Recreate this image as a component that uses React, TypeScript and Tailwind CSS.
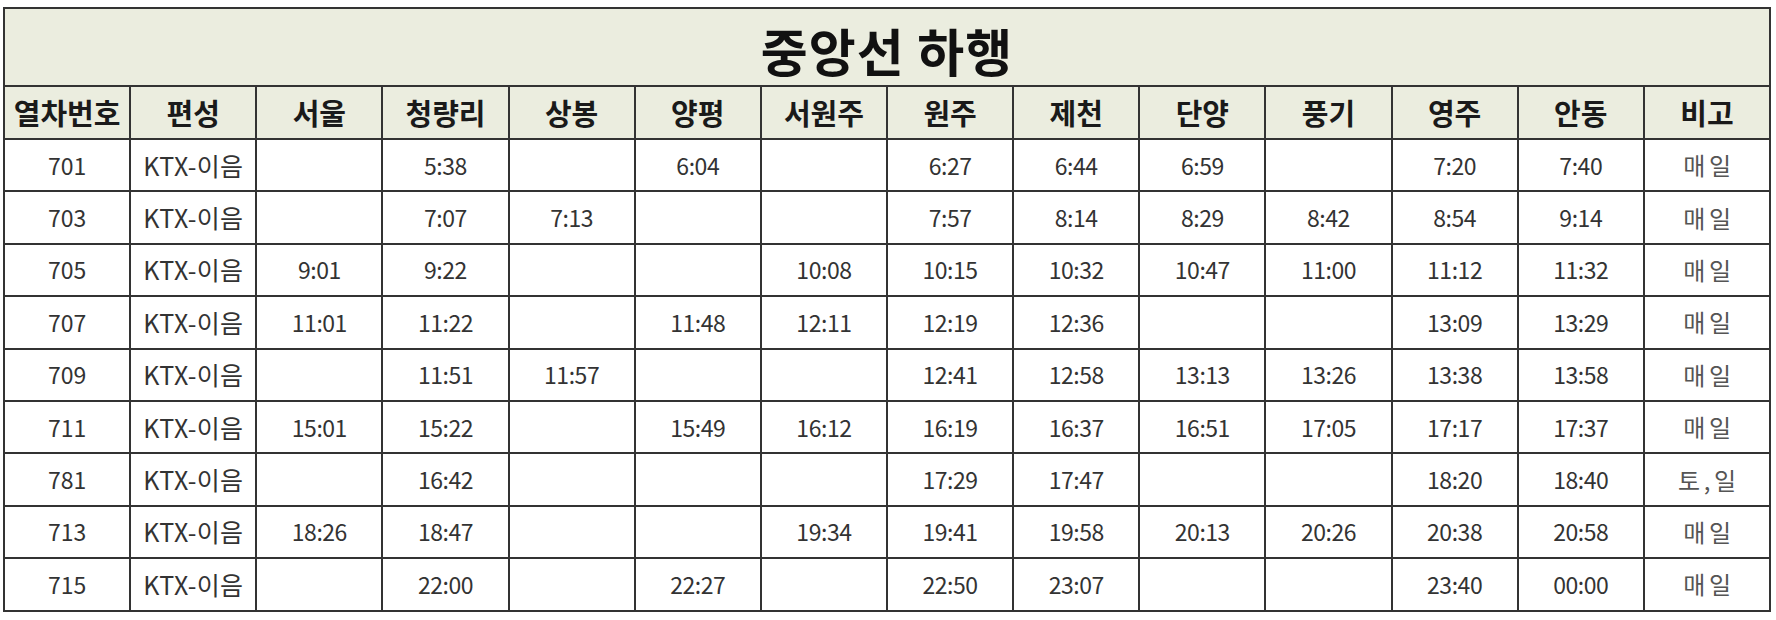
const stations = ['서울', '청량리', '상봉', '양평', '서원주', '원주', '제천', '단양', '풍기', '영주', '안동']

const trains = [
  { no: '701', times: ['', '5:38', '', '6:04', '', '6:27', '6:44', '6:59', '', '7:20', '7:40'], note: '매일' },
  { no: '703', times: ['', '7:07', '7:13', '', '', '7:57', '8:14', '8:29', '8:42', '8:54', '9:14'], note: '매일' },
  { no: '705', times: ['9:01', '9:22', '', '', '10:08', '10:15', '10:32', '10:47', '11:00', '11:12', '11:32'], note: '매일' },
  { no: '707', times: ['11:01', '11:22', '', '11:48', '12:11', '12:19', '12:36', '', '', '13:09', '13:29'], note: '매일' },
  { no: '709', times: ['', '11:51', '11:57', '', '', '12:41', '12:58', '13:13', '13:26', '13:38', '13:58'], note: '매일' },
  { no: '711', times: ['15:01', '15:22', '', '15:49', '16:12', '16:19', '16:37', '16:51', '17:05', '17:17', '17:37'], note: '매일' },
  { no: '781', times: ['', '16:42', '', '', '', '17:29', '17:47', '', '', '18:20', '18:40'], note: '토,일' },
  { no: '713', times: ['18:26', '18:47', '', '', '19:34', '19:41', '19:58', '20:13', '20:26', '20:38', '20:58'], note: '매일' },
  { no: '715', times: ['', '22:00', '', '22:27', '', '22:50', '23:07', '', '', '23:40', '00:00'], note: '매일' },
]

const headers = ['열차번호', '편성', ...stations, '비고']

export default function App() {
  return (
    <div className="w-[1776px] h-[620px] bg-white pt-[7px] pl-[3px] font-['Noto_Sans_CJK_KR','Noto_Sans',sans-serif]">
      <div className="w-[1768px] border-l-2 border-t-2 border-[#333]">
        {/* title */}
        <div className="h-[78px] bg-[#ebeddf] border-r-2 border-b-2 border-[#333] flex items-center justify-center pt-[6px]">
          <span className="text-[51px] font-bold text-[#111] leading-none tracking-[0.02em]">중앙선 하행</span>
        </div>

        {/* column headers */}
        <div className="grid grid-cols-[repeat(14,minmax(0,1fr))] h-[53px] bg-[#ebeddf]">
          {headers.map((h) => (
            <div
              key={h}
              className="border-r-2 border-b-2 border-[#333] flex items-center justify-center text-[29px] font-bold text-[#1a1a1a] leading-none"
            >
              {h}
            </div>
          ))}
        </div>

        {/* rows */}
        {trains.map((t) => (
          <div key={t.no} className="grid grid-cols-[repeat(14,minmax(0,1fr))] h-[52.4px]">
            <div className="border-r-2 border-b-2 border-[#333] flex items-center justify-center text-[23px] text-[#333] leading-none">
              {t.no}
            </div>
            <div className="border-r-2 border-b-2 border-[#333] flex items-center justify-center text-[25px] text-[#333] leading-none tracking-[0.01em]">
              KTX-이음
            </div>
            {t.times.map((v, i) => (
              <div
                key={i}
                className="border-r-2 border-b-2 border-[#333] flex items-center justify-center text-[23px] text-[#333] leading-none tracking-[-0.02em]"
              >
                {v}
              </div>
            ))}
            <div className="border-r-2 border-b-2 border-[#333] flex items-center justify-center text-[24px] text-[#555] leading-none tracking-[0.15em] pl-[4px]">
              {t.note}
            </div>
          </div>
        ))}
      </div>
    </div>
  )
}
